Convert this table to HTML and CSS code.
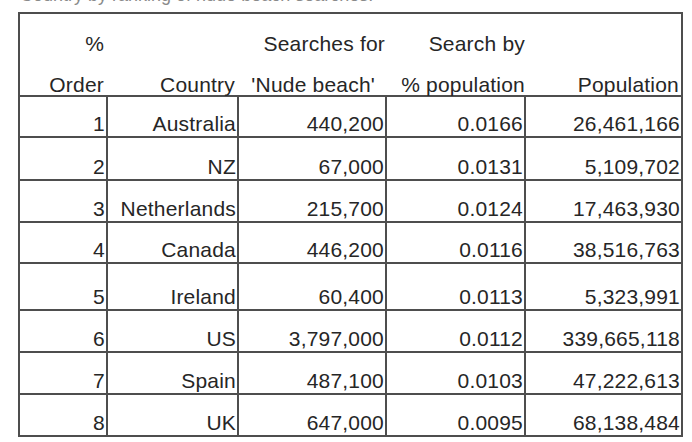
FILE: index.html
```html
<!DOCTYPE html>
<html>
<head>
<meta charset="utf-8">
<link rel="stylesheet" href="styles.css">
</head>
<body>
<div class="page">
  <div class="caption"><span>Country by ranking of nude beach searches.</span></div>
  <table class="data">
    <colgroup>
      <col class="c1"><col class="c2"><col class="c3"><col class="c4"><col class="c5">
    </colgroup>
    <thead>
      <tr class="h1">
        <th class="pr3">%</th>
        <th></th>
        <th class="pr1">Searches for</th>
        <th class="pr0">Search by</th>
        <th></th>
      </tr>
      <tr class="h2">
        <th class="pr3">Order</th>
        <th class="pr3">Country</th>
        <th class="pr11">'Nude beach'</th>
        <th class="pr0">% population</th>
        <th class="pr2">Population</th>
      </tr>
    </thead>
    <tbody>
      <tr><td>1</td><td>Australia</td><td>440,200</td><td>0.0166</td><td>26,461,166</td></tr>
      <tr><td>2</td><td>NZ</td><td>67,000</td><td>0.0131</td><td>5,109,702</td></tr>
      <tr><td>3</td><td>Netherlands</td><td>215,700</td><td>0.0124</td><td>17,463,930</td></tr>
      <tr><td>4</td><td>Canada</td><td>446,200</td><td>0.0116</td><td>38,516,763</td></tr>
      <tr><td>5</td><td>Ireland</td><td>60,400</td><td>0.0113</td><td>5,323,991</td></tr>
      <tr><td>6</td><td>US</td><td>3,797,000</td><td>0.0112</td><td>339,665,118</td></tr>
      <tr><td>7</td><td>Spain</td><td>487,100</td><td>0.0103</td><td>47,222,613</td></tr>
      <tr><td>8</td><td>UK</td><td>647,000</td><td>0.0095</td><td>68,138,484</td></tr>
    </tbody>
  </table>
</div>
</body>
</html>
```
FILE: styles.css
```css
html, body {
  margin: 0;
  padding: 0;
  background: #ffffff;
}

.page {
  width: 692px;
  height: 442px;
  overflow: hidden;
  padding-left: 18px;
  box-sizing: border-box;
  font-family: "Liberation Sans", Arial, sans-serif;
  color: #262626;
}

.caption {
  height: 12px;
  overflow: hidden;
}

.caption span {
  display: block;
  font-size: 18px;
  line-height: 20px;
  margin-top: -15px;
  padding-left: 2px;
  color: #8a8a8a;
  white-space: nowrap;
}

.data {
  border-collapse: collapse;
  table-layout: fixed;
  width: 663px;
  font-size: 21px;
  letter-spacing: 0.2px;
  border: 2px solid #4e4e4e;
}

.c1 { width: 88px; }
.c2 { width: 131px; }
.c3 { width: 148px; }
.c4 { width: 139px; }
.c5 { width: 157px; }

.data th {
  font-weight: normal;
  text-align: right;
  vertical-align: bottom;
  line-height: 20px;
  padding: 0;
  white-space: nowrap;
  border: none;
}

.data .h1 { height: 41px; }
.data .h2 { height: 42px; }

.data thead tr.h2 th {
  border-bottom: 2px solid #4e4e4e;
}

.pr0 { padding-right: 0 !important; }
.pr1 { padding-right: 1px !important; }
.pr2 { padding-right: 2px !important; }
.pr3 { padding-right: 3px !important; }
.pr11 { padding-right: 11px !important; }

.data td {
  text-align: right;
  vertical-align: bottom;
  line-height: 20px;
  padding: 0 1px 2px 0;
  border: 2px solid #4e4e4e;
  white-space: nowrap;
}

.data tbody tr { height: 42px; }
.data tbody tr:nth-child(1) { height: 41px; }
.data tbody tr:nth-child(2) { height: 43px; }
.data tbody tr:nth-child(4) { height: 41px; }
.data tbody tr:nth-child(5) { height: 47px; }
```
